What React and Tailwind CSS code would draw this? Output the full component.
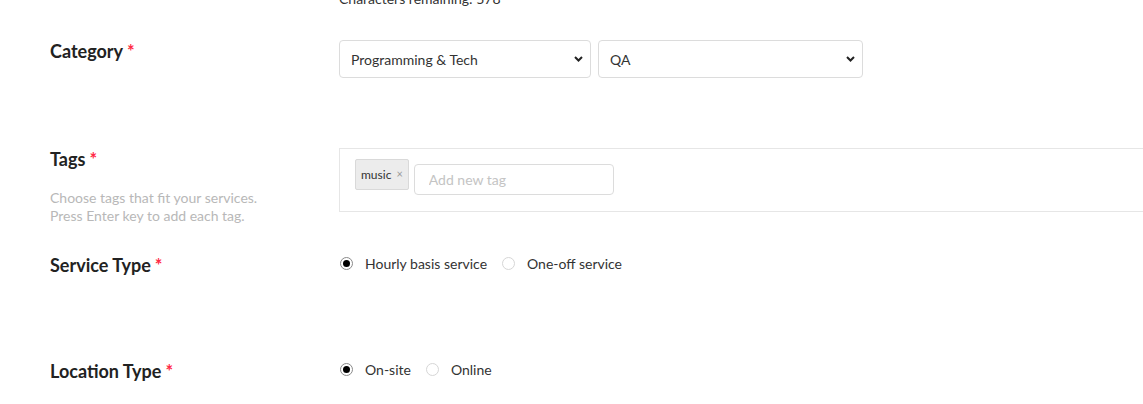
const Req = () => <span className="ml-[4px] text-[#ff2a45]">*</span>;

const Chevron = () => (
  <svg className="pointer-events-none absolute right-[8px] top-[16px]" width="9" height="6" viewBox="0 0 9 6" fill="none">
    <path d="M1 1l3.5 3.5L8 1" stroke="#222" strokeWidth="2" />
  </svg>
);

const Select = ({ value, width }) => (
  <div className={`relative ${width}`}>
    <select
      defaultValue={value}
      className="w-full h-[38px] appearance-none rounded-[4px] border border-[#dcdcdc] bg-white pl-[11px] pr-8 text-[14px] text-[#333] outline-none"
    >
      <option>{value}</option>
    </select>
    <Chevron />
  </div>
);

const Radio = ({ checked, label }) => (
  <label className="flex items-center gap-[12px] text-[14px] text-[#333]">
    <span
      className={`flex h-[13px] w-[13px] items-center justify-center rounded-full border ${
        checked ? "border-[#8a8a8a]" : "border-[#d6d6d6]"
      } bg-white`}
    >
      {checked && <span className="h-[7px] w-[7px] rounded-full bg-black" />}
    </span>
    {label}
  </label>
);

const Label = ({ children, className = "" }) => (
  <div className={`w-[289px] shrink-0 ${className}`}>
    <h3 className="text-[18px] leading-[24px] font-bold text-[#222]">
      {children}
      <Req />
    </h3>
  </div>
);

export default function App() {
  return (
    <div className="h-[404px] w-[1143px] overflow-hidden bg-white font-['Lato','Liberation_Sans',sans-serif]">
      <div className="pl-[50px]">
        {/* counter from the description field above */}
        <div className="ml-[289px] mt-[-11px] text-[14px] leading-[20px] text-[#333]">
          Characters remaining: 578
        </div>

        {/* Category */}
        <div className="mt-[31px] flex items-start">
          <Label className="mt-[-1px]">Category</Label>
          <div className="flex gap-[7px]">
            <Select value="Programming & Tech" width="w-[252px]" />
            <Select value="QA" width="w-[265px]" />
          </div>
        </div>

        {/* Tags */}
        <div className="mt-[70px] flex items-start">
          <div className="w-[289px] shrink-0 mt-[-1px]">
            <h3 className="text-[18px] leading-[24px] font-bold text-[#222]">
              Tags
              <Req />
            </h3>
            <p className="mt-[18px] text-[14px] leading-[18px] text-[#b8b8b8]">
              Choose tags that fit your services.
              <br />
              Press Enter key to add each tag.
            </p>
          </div>
          <div className="h-[64px] w-[900px] shrink-0 border border-[#e6e6e6] pl-[15px] pt-[10px]">
            <div className="flex items-start gap-[5px]">
              <span className="flex h-[31px] items-center gap-[5px] rounded-[2px] border border-[#d9d9d9] bg-[#ececec] px-[5px] text-[12px] text-[#333]">
                music
                <span className="text-[11px] text-[#999]">×</span>
              </span>
              <input
                placeholder="Add new tag"
                className="mt-[5px] h-[31px] w-[200px] rounded-[4px] border border-[#dcdcdc] px-[14px] text-[14px] text-[#333] placeholder:text-[#c4c4c4] outline-none"
              />
            </div>
          </div>
        </div>

        {/* Service Type */}
        <div className="mt-[28px] flex items-start">
          <Label>Service Type</Label>
          <div className="flex items-center gap-[15px] pl-[1px]">
            <Radio checked label="Hourly basis service" />
            <Radio label="One-off service" />
          </div>
        </div>

        {/* Location Type */}
        <div className="mt-[82px] flex items-start">
          <Label>Location Type</Label>
          <div className="flex items-center gap-[15px] pl-[1px]">
            <Radio checked label="On-site" />
            <Radio label="Online" />
          </div>
        </div>
      </div>
    </div>
  );
}
